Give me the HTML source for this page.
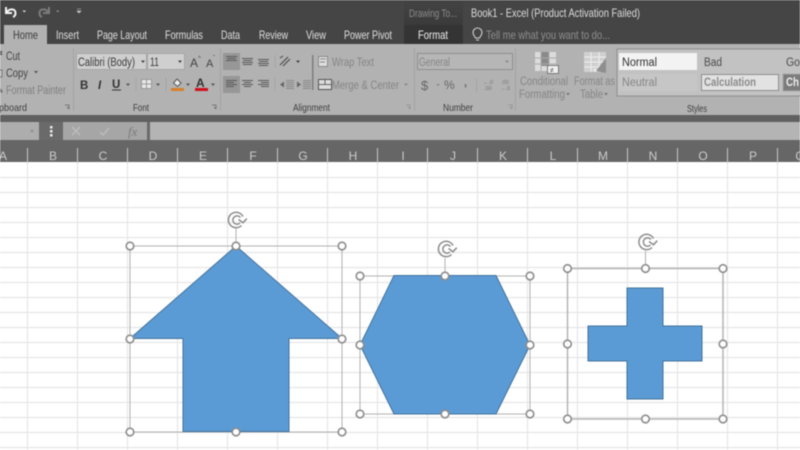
<!DOCTYPE html>
<html><head><meta charset="utf-8"><style>
html,body{margin:0;padding:0;background:#fff;width:800px;height:450px;overflow:hidden}
svg{display:block;font-family:"Liberation Sans",sans-serif}
.b{filter:blur(.4px)}
</style></head><body>
<svg width="800" height="450" viewBox="0 0 800 450" xmlns="http://www.w3.org/2000/svg">
<defs><linearGradient id="ctx" x1="0" y1="0" x2="0" y2="1"><stop offset="0" stop-color="#444"/><stop offset="1" stop-color="#333"/></linearGradient></defs>
<g class="b">
<rect width="800" height="450" fill="#fff"/>
<!-- grid -->
<g stroke="#e6e6e6" stroke-width="1.200">
<path d="M0 177.500H800M0 192.500H800M0 207.500H800M0 222.500H800M0 237.500H800M0 252.500H800M0 267.500H800M0 282.500H800M0 297.500H800M0 312.500H800M0 327.500H800M0 342.500H800M0 357.500H800M0 372.500H800M0 387.500H800M0 402.500H800M0 417.500H800M0 432.500H800M0 447.500H800"/>
<path d="M27.500 162V450M77.500 162V450M127.500 162V450M177.500 162V450M227.500 162V450M277.500 162V450M327.500 162V450M377.500 162V450M427.500 162V450M477.500 162V450M527.500 162V450M577.500 162V450M627.500 162V450M677.500 162V450M727.500 162V450M777.500 162V450"/>
</g>
<!-- title -->
<rect width="800" height="44" fill="#454545"/>
<rect x="404" width="59" height="44" fill="url(#ctx)"/>
<text x="409" y="17" font-size="11" fill="#8b8b8b" textLength="48" lengthAdjust="spacingAndGlyphs">Drawing To...</text>
<text x="471" y="17" font-size="12" fill="#dedede" textLength="169" lengthAdjust="spacingAndGlyphs">Book1 - Excel (Product Activation Failed)</text>
<!-- qat -->
<path d="M6 7v6h6M6.500 12.500c3-4.500 9-4 9 .5 0 2-1 3.500-2.500 4" fill="none" stroke="#f4f4f4" stroke-width="2"/>
<path d="M22.500 10.500l3.500 0-1.750 2z" fill="#ddd"/>
<path d="M49 7v6h-6M48.500 12.500c-3-4.500-9-4-9 .5 0 2 1 3.500 2.500 4" fill="none" stroke="#7c7c7c" stroke-width="2"/>
<path d="M56 10.500l3.500 0-1.750 2z" fill="#8a8a8a"/>
<path d="M77 9h4M77 11l4 0-2 2z" fill="#ccc" stroke="#ccc" stroke-width=".6"/>
<!-- tabs -->
<rect x="4" y="25" width="43" height="20" fill="#b2b2b2"/>
<rect x="404" y="25" width="59" height="19" fill="#343434"/>
<g font-size="12" fill="#e0e0e0">
<text x="13" y="39" fill="#3c3c3c" textLength="25" lengthAdjust="spacingAndGlyphs">Home</text>
<text x="56" y="39" textLength="23" lengthAdjust="spacingAndGlyphs">Insert</text>
<text x="97" y="39" textLength="50" lengthAdjust="spacingAndGlyphs">Page Layout</text>
<text x="165" y="39" textLength="38" lengthAdjust="spacingAndGlyphs">Formulas</text>
<text x="221" y="39" textLength="19" lengthAdjust="spacingAndGlyphs">Data</text>
<text x="259" y="39" textLength="29" lengthAdjust="spacingAndGlyphs">Review</text>
<text x="306" y="39" textLength="20" lengthAdjust="spacingAndGlyphs">View</text>
<text x="344" y="39" textLength="48" lengthAdjust="spacingAndGlyphs">Power Pivot</text>
<text x="418" y="39" fill="#f2f2f2" textLength="30" lengthAdjust="spacingAndGlyphs">Format</text>
<text x="486" y="39" fill="#8f8f8f" textLength="124" lengthAdjust="spacingAndGlyphs">Tell me what you want to do...</text>
</g>
<path d="M475.500 38c-.8-1.800-2.500-3-2.500-5.500a4.500 4.500 0 0 1 9 0c0 2.500-1.700 3.700-2.500 5.500zM476 40h3" fill="none" stroke="#cfcfcf" stroke-width="1.100"/>
<!-- ribbon -->
<rect y="44" width="800" height="71" fill="#b2b2b2"/>
<g stroke="#a2a2a2"><path d="M73.500 48V111M220.500 48V111M414.500 48V111M515.500 48V111"/></g>
<!-- clipboard -->
<path d="M0 51l2 4M2 51l-2 4" stroke="#555" fill="none"/>
<rect x="-2" y="70" width="4" height="7" fill="#c8c8c8" stroke="#777"/>
<path d="M0 88l3 3-1 2-2-1z" fill="#777"/>
<g font-size="11.500">
<text x="6" y="60" fill="#444" textLength="14" lengthAdjust="spacingAndGlyphs">Cut</text>
<text x="6" y="77" fill="#444" textLength="22" lengthAdjust="spacingAndGlyphs">Copy</text>
<path d="M34 71l4 0-2 2.500z" fill="#555"/>
<text x="6" y="94" fill="#808080" textLength="60" lengthAdjust="spacingAndGlyphs">Format Painter</text>
</g>
<g font-size="10.500" fill="#3e3e3e">
<text x="-1" y="111" textLength="28" lengthAdjust="spacingAndGlyphs">pboard</text>
<text x="133" y="111" textLength="16" lengthAdjust="spacingAndGlyphs">Font</text>
<text x="293" y="111" textLength="37" lengthAdjust="spacingAndGlyphs">Alignment</text>
<text x="443" y="111" textLength="30" lengthAdjust="spacingAndGlyphs">Number</text>
<text x="687" y="112" textLength="20" lengthAdjust="spacingAndGlyphs">Styles</text>
</g>
<g fill="none" stroke="#666" stroke-width=".8">
<path d="M65 105h4v4M67 107l2 2"/><path d="M212 105h4v4M214 107l2 2"/>
<path d="M406 105h4v4M408 107l2 2" stroke="#8e8e8e"/><path d="M508 105h4v4M510 107l2 2" stroke="#8e8e8e"/>
</g>
<!-- font -->
<rect x="76.500" y="53.500" width="70" height="16" fill="#cfcfcf" stroke="#a6a6a6"/>
<rect x="147.500" y="53.500" width="37" height="16" fill="#cfcfcf" stroke="#a6a6a6"/>
<text x="78" y="66" font-size="11.500" fill="#3a3a3a" textLength="57" lengthAdjust="spacingAndGlyphs">Calibri (Body)</text>
<text x="150" y="66" font-size="11.500" fill="#3a3a3a" textLength="9" lengthAdjust="spacingAndGlyphs">11</text>
<path d="M141 60.500h4l-2 2.500zM178 60.500h4l-2 2.500z" fill="#444"/>
<text x="190" y="67" font-size="12" fill="#444">A</text><text x="198" y="60" font-size="6" fill="#444">^</text>
<text x="206" y="67" font-size="11" fill="#444">A</text><text x="213" y="60" font-size="6" fill="#444">ˇ</text>
<text x="80" y="89" font-size="11.500" font-weight="bold" fill="#333">B</text>
<text x="98" y="89" font-size="11.500" font-weight="bold" font-style="italic" fill="#333">I</text>
<text x="112" y="88" font-size="11.500" font-weight="bold" fill="#333">U</text>
<path d="M112 90h9" stroke="#333"/>
<path d="M126 83.500h4l-2 2.500zM156 83.500h4l-2 2.500zM186 83.500h4l-2 2.500zM211 83.500h4l-2 2.500z" fill="#555"/>
<rect x="141.500" y="79.500" width="10" height="9" fill="#e8e8e8" stroke="#999"/>
<path d="M146.500 80V88M142 84H151" stroke="#999"/>
<path d="M136 78V91M166 78V91" stroke="#a4a4a4"/>
<path d="M177 79l4 4-3.500 3.500-4-3.500z" fill="#eee" stroke="#555"/>
<rect x="171" y="88" width="13" height="3" fill="#d8802c"/>
<text x="196" y="87" font-size="12" font-weight="bold" fill="#333">A</text>
<rect x="195" y="88" width="13" height="3" fill="#d0101c"/>
<!-- alignment -->
<rect x="223" y="53" width="17" height="17" fill="#979797"/>
<rect x="223" y="76" width="17" height="17" fill="#979797"/>
<g stroke="#595959" stroke-width="1" fill="none">
<path d="M226 56.500h11M227 58.500h9M226 60.500h11"/>
<path d="M242 58.500h11M243 60.500h9M242 62.500h11M243 64.500h9" />
<path d="M258 59.500h11M259 61.500h9M258 63.500h11M259 65.500h9"/>
<path d="M226 80.500h11M226 82.500h8M226 84.500h11M226 86.500h8"/>
<path d="M242 80.500h11M244 82.500h7M242 84.500h11M244 86.500h7"/>
<path d="M258 80.500h11M261 82.500h8M258 84.500h11M261 86.500h8"/>
<path d="M280 65l8-8M283 66l7-7M280 58l3-2" stroke="#444"/>
</g>
<path d="M296 60.500h4l-2 2.500z" fill="#444"/>
<path d="M275 55V68M275 78V91" stroke="#a4a4a4"/>
<g stroke="#8a8a8a" fill="none"><path d="M286 80.500h8M286 82.500h8M286 84.500h8M286 86.500h8M286 88.500h8"/><path d="M303 80.500h8M303 82.500h8M303 84.500h8M303 86.500h8M303 88.500h8"/></g>
<path d="M280 84.500l4-3v6zM301 84.500l-4-3v6z" fill="#666"/>
<rect x="312" y="55" width="1.500" height="35" fill="#7d7d7d"/>
<rect x="318.500" y="56.500" width="9" height="10" fill="#ddd" stroke="#8a8a8a"/>
<path d="M320 59h6M320 62h5" stroke="#888"/>
<rect x="318.500" y="79.500" width="13" height="10" fill="#ddd" stroke="#555"/>
<path d="M319 84.500h12M325 80v4" stroke="#666"/>
<text x="332" y="66" font-size="11.500" fill="#858585" textLength="42" lengthAdjust="spacingAndGlyphs">Wrap Text</text>
<text x="332" y="89" font-size="11.500" fill="#858585" textLength="67" lengthAdjust="spacingAndGlyphs">Merge &amp; Center</text>
<path d="M404 83.500h4l-2 2.500z" fill="#8a8a8a"/>
<!-- number -->
<rect x="417.500" y="53.500" width="95" height="16" fill="#b6b6b6" stroke="#8f8f8f"/>
<text x="419" y="66" font-size="11.500" fill="#858585" textLength="31" lengthAdjust="spacingAndGlyphs">General</text>
<path d="M505 60.500h4l-2 2.500z" fill="#8a8a8a"/>
<text x="421" y="90" font-size="13" fill="#666">$</text>
<path d="M436 84h4l-2 2z" fill="#888"/>
<text x="444" y="89" font-size="12" fill="#666">%</text>
<text x="464" y="86" font-size="11" font-weight="bold" fill="#666">,</text>
<path d="M476.500 78V92" stroke="#a4a4a4"/>
<text x="483" y="84" font-size="5.500" fill="#777">←.0</text><text x="484" y="90" font-size="5.500" fill="#777">.00</text>
<text x="501" y="84" font-size="5.500" fill="#777">.00</text><text x="500" y="90" font-size="5.500" fill="#777">→.0</text>
<!-- conditional -->
<rect x="535" y="52" width="21" height="19" fill="#dcdcdc"/>
<rect x="541" y="52" width="8" height="14" fill="#8a8a8a"/>
<path d="M535 58h21M535 64h21M541 52v19M549 52v19" stroke="#aaa"/>
<rect x="547.500" y="65.500" width="11" height="8" fill="#f0f0f0" stroke="#777"/>
<text x="550" y="72.500" font-size="7" fill="#444">≠</text>
<rect x="584" y="52" width="22" height="20" fill="#d0d0d0"/>
<path d="M584 57h22M584 62h22M584 67h22M591 52v20M599 52v20" stroke="#eee"/>
<path d="M606 58l-10 13 10 2z" fill="#8e8e8e"/>
<path d="M594 68l3 2-1 2-3-1z" fill="#e8e8e8"/>
<g font-size="11.500" fill="#858585">
<text x="520" y="85" textLength="48" lengthAdjust="spacingAndGlyphs">Conditional</text>
<text x="519" y="98" textLength="46" lengthAdjust="spacingAndGlyphs">Formatting</text>
<text x="574" y="85" textLength="41" lengthAdjust="spacingAndGlyphs">Format as</text>
<text x="580" y="98" textLength="23" lengthAdjust="spacingAndGlyphs">Table</text>
</g>
<path d="M566 93h4l-2 2.500zM604 93h4l-2 2.500z" fill="#777"/>
<!-- styles -->
<rect x="617" y="49" width="190" height="47" fill="#c2c2c2" stroke="#8e8e8e"/>
<rect x="619" y="53" width="78" height="17" fill="#f3f3f3"/>
<rect x="619" y="74" width="78" height="17" fill="#c6c6c6"/>
<rect x="701.500" y="74.500" width="77" height="16" fill="#e2e2e2" stroke="#8e8e8e"/>
<rect x="783" y="74" width="20" height="17" fill="#7b7b7b" stroke="#a6a6a6"/>
<g font-size="11.500">
<text x="622" y="66" fill="#2e2e2e" textLength="35" lengthAdjust="spacingAndGlyphs">Normal</text>
<text x="704" y="66" fill="#4a4a4a" textLength="18" lengthAdjust="spacingAndGlyphs">Bad</text>
<text x="786" y="66" fill="#4a4a4a" textLength="14" lengthAdjust="spacingAndGlyphs">Go</text>
<text x="622" y="86" fill="#858585" textLength="35" lengthAdjust="spacingAndGlyphs">Neutral</text>
<text x="704" y="86" fill="#8a8a8a" font-weight="bold" textLength="52" lengthAdjust="spacingAndGlyphs">Calculation</text>
<text x="786" y="86" fill="#eee" font-weight="bold" textLength="13" lengthAdjust="spacingAndGlyphs">Ch</text>
</g>
<!-- formula bar -->
<rect y="115" width="800" height="47" fill="#6a6a6a"/>
<rect y="115" width="800" height="7" fill="#606060"/>
<rect y="122" width="39" height="18" fill="#adadad"/>
<path d="M30 130h4l-2 2.500z" fill="#8a8a8a"/>
<rect x="50" y="126" width="2.500" height="2.500" fill="#eee"/><rect x="50" y="130" width="2.500" height="2.500" fill="#eee"/><rect x="50" y="134" width="2.500" height="2.500" fill="#eee"/>
<rect x="63" y="122" width="84" height="18" fill="#a6a6a6"/>
<rect x="150" y="122" width="650" height="18" fill="#b4b4b4"/>
<path d="M72 127l8 8M80 127l-8 8M100 132l3 3 6-7" fill="none" stroke="#bdbdbd" stroke-width="1.400"/>
<text x="128" y="136" font-size="13" font-style="italic" font-family="Liberation Serif" fill="#7a7a7a">fx</text>
<!-- headers -->
<rect y="140" width="800" height="22" fill="#666"/>
<path d="M27.500 148V163M77.500 148V163M127.500 148V163M177.500 148V163M227.500 148V163M277.500 148V163M327.500 148V163M377.500 148V163M427.500 148V163M477.500 148V163M527.500 148V163M577.500 148V163M627.500 148V163M677.500 148V163M727.500 148V163M777.500 148V163" stroke="#c8c8c8"/>
<g font-size="12" fill="#cccccc" text-anchor="middle">
<text x="3" y="160">A</text><text x="53" y="160">B</text><text x="103" y="160">C</text><text x="153" y="160">D</text><text x="203" y="160">E</text><text x="253" y="160">F</text><text x="303" y="160">G</text><text x="353" y="160">H</text><text x="403" y="160">I</text><text x="453" y="160">J</text><text x="503" y="160">K</text><text x="553" y="160">L</text><text x="603" y="160">M</text><text x="653" y="160">N</text><text x="703" y="160">O</text><text x="753" y="160">P</text><text x="800" y="160">Q</text>
</g>
<!-- shape frames -->
<g fill="none" stroke="#b0b0b0" stroke-width="1">
<rect x="130" y="246" width="212" height="186"/>
<rect x="360" y="276" width="170" height="138"/>
<rect x="567.500" y="268.500" width="155.500" height="150.500" stroke-width="1.400"/>
<path d="M236 228V246M445 258V276M645.500 251V268" />
</g>
<!-- shapes -->
<g fill="#5b9bd5" stroke="#41719c" stroke-width="1">
<polygon points="236,246 342,338.500 289,338.500 289,431.500 183,431.500 183,338.500 130,338.500"/>
<polygon points="394,275.500 496,275.500 530,345 496,414 394,414 360,345"/>
<polygon points="627,288 663,288 663,326 702,326 702,361 663,361 663,399 627,399 627,361 588,361 588,326 627,326"/>
</g>
<!-- handles -->
<g fill="#fff" stroke="#8c8c8c" stroke-width="1.600">
<circle cx="130" cy="246" r="3.800"/><circle cx="236" cy="246" r="3.800"/><circle cx="342" cy="246" r="3.800"/>
<circle cx="130" cy="339" r="3.800"/><circle cx="342" cy="339" r="3.800"/>
<circle cx="130" cy="432" r="3.800"/><circle cx="236" cy="432" r="3.800"/><circle cx="342" cy="432" r="3.800"/>
<circle cx="360" cy="276" r="3.800"/><circle cx="445" cy="276" r="3.800"/><circle cx="530" cy="276" r="3.800"/>
<circle cx="360" cy="345" r="3.800"/><circle cx="530" cy="345" r="3.800"/>
<circle cx="360" cy="414" r="3.800"/><circle cx="445" cy="414" r="3.800"/><circle cx="530" cy="414" r="3.800"/>
<circle cx="567.500" cy="268.500" r="3.800"/><circle cx="645.500" cy="268.500" r="3.800"/><circle cx="723" cy="268.500" r="3.800"/>
<circle cx="567.500" cy="344" r="3.800"/><circle cx="723" cy="344" r="3.800"/>
<circle cx="567.500" cy="419" r="3.800"/><circle cx="645.500" cy="419" r="3.800"/><circle cx="723" cy="419" r="3.800"/>
</g>
<!-- rotate icons -->
<g fill="none" stroke="#8c8c8c" stroke-width="1.500">
<g><path d="M241.500 225.500a7.700 7.700 0 1 1 1.500-9"/><path d="M240 223a4.200 4.200 0 1 1 .4-5.500"/><path d="M238.500 219.500l4.500 3.200 3.800-4"/></g>
<g transform="translate(210,29)"><path d="M241.500 225.500a7.700 7.700 0 1 1 1.500-9"/><path d="M240 223a4.200 4.200 0 1 1 .4-5.500"/><path d="M238.500 219.500l4.500 3.200 3.800-4"/></g>
<g transform="translate(410.500,22)"><path d="M241.500 225.500a7.700 7.700 0 1 1 1.500-9"/><path d="M240 223a4.200 4.200 0 1 1 .4-5.500"/><path d="M238.500 219.500l4.500 3.200 3.800-4"/></g>
</g>
</g>
</svg>
</body></html>
